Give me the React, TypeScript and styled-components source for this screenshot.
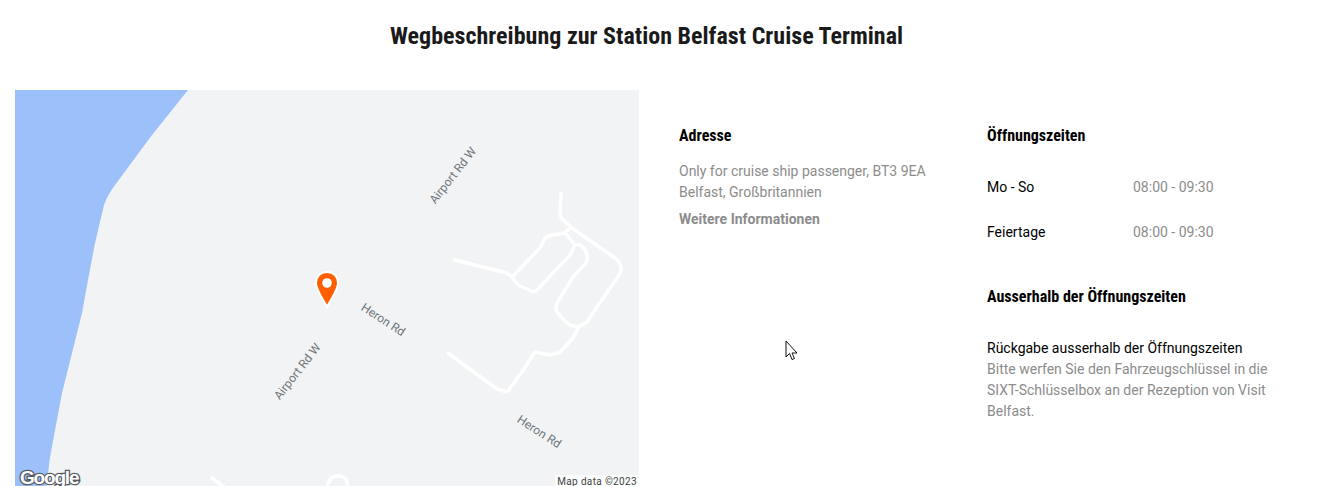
import React from "react";
import styled, { createGlobalStyle } from "styled-components";

const GlobalStyle = createGlobalStyle`
  html, body {
    margin: 0;
    height: 100%;
    overflow: hidden;
    background: #fff;
  }
  body {
    font-family: Roboto, "Liberation Sans", sans-serif;
    font-size: 14px;
    color: #000;
  }
`;

const Page = styled.div`
  position: relative;
  width: 1343px;
  height: 486px;
  overflow: hidden;
`;

const Title = styled.h1`
  margin: 0;
  padding: 22px 50px 0 0;
  height: 90px;
  box-sizing: border-box;
  font-family: "Roboto Condensed", Roboto, sans-serif;
  font-stretch: condensed;
  font-size: 24px;
  line-height: 28px;
  letter-spacing: 0.02px;
  font-weight: 700;
  text-align: center;
  color: #1a1a1a;
`;

const Content = styled.div`
  display: grid;
  grid-template-columns: 624px 348px 1fr;
  padding-left: 15px;
`;

const MapFrame = styled.div`
  position: relative;
  height: 400px;
  background: #f1f3f4;
  overflow: hidden;
`;

const MapCanvas = styled.svg`
  display: block;
  width: 624px;
  height: 400px;
`;

const StreetLabel = styled.text`
  font-family: Roboto, sans-serif;
  font-size: 12px;
  fill: #70757a;
  text-anchor: middle;
`;

const LogoText = styled.text`
  font-family: "Liberation Sans", sans-serif;
  font-size: 19px;
  font-weight: 700;
  letter-spacing: -1.2px;
  fill: #fff;
  stroke: #565b61;
  stroke-width: 2.6px;
  paint-order: stroke;
`;

const Attribution = styled.div`
  position: absolute;
  right: 0;
  bottom: 0;
  height: 15px;
  padding: 0 2px;
  background: rgba(255, 255, 255, 0.7);
  font-size: 10px;
  line-height: 14px;
  letter-spacing: 0.35px;
  color: #444;
`;

const InfoColumn = styled.section`
  padding: 37px 0 0 40px;
`;

const HoursColumn = styled.section`
  padding: 37px 0 0 0;
  width: 290px;
`;

const Heading = styled.h2`
  margin: 0;
  font-family: "Roboto Condensed", Roboto, sans-serif;
  font-stretch: condensed;
  font-size: 16px;
  line-height: 18px;
  font-weight: 700;
  color: #000;
`;

const Muted = styled.p`
  margin: 16px 0 0;
  width: 260px;
  line-height: 21px;
  color: #8c8c8c;
`;

const MoreLink = styled.a`
  display: block;
  margin-top: 6px;
  line-height: 21px;
  font-weight: 700;
  color: #8c8c8c;
`;

const HoursList = styled.div`
  display: grid;
  grid-template-columns: 146px 1fr;
  grid-auto-rows: 21px;
  row-gap: 24px;
  margin-top: 32px;
`;

const Day = styled.span`
  line-height: 21px;
`;

const Time = styled.span`
  line-height: 21px;
  color: #8c8c8c;
`;

const SubHeading = styled(Heading)`
  margin-top: 45px;
`;

const NoteTitle = styled.div`
  margin-top: 32px;
  line-height: 21px;
`;

const NoteBody = styled.div`
  line-height: 21px;
  color: #8c8c8c;
`;

const Cursor = styled.svg`
  position: absolute;
  left: 785px;
  top: 340px;
`;

function MapDrawing() {
  return (
    <MapCanvas viewBox="15 90 624 400">
      <path
        d="M15 90H188L152 135L115 185Q107 196 104 205L95 243L88 280L82 313L62 393L50 457L46 490H15Z"
        fill="#9cc0fa"
      />
      <g fill="none" stroke="#fff" strokeWidth="3.5" strokeLinecap="round" strokeLinejoin="round">
        <path d="M561 193L560 213Q560 218 563 220L572 228L615 258Q626 267 617 278L597 307L587 322L578 327Q577 331 573 338L560 352L550 355L535 352L522 372L507 392L497 389L448 353" />
        <path d="M455 260L503 272Q508 273 512 277Q516 284 520 286L531 291Q535 293 538 289L570 255L575 245L565 233L570 228" />
        <path d="M512 277L540 248L545 238Q548 236 552 235L565 233" />
        <path d="M575 245Q578 244 580 245Q586 249 587 255Q588 260 586 263L573 277L557 303Q555 309 557 312Q563 320 570 325L578 327" />
        <path d="M212 478L223 486" />
        <path d="M328 484L331 478Q338 474 345 478Q348 481 347 490" />
      </g>
      <StreetLabel transform="translate(456 178) rotate(-52)">Airport Rd W</StreetLabel>
      <StreetLabel transform="translate(300.500 374) rotate(-52)">Airport Rd W</StreetLabel>
      <StreetLabel transform="translate(381 323) rotate(33)">Heron Rd</StreetLabel>
      <StreetLabel transform="translate(537 435) rotate(33)">Heron Rd</StreetLabel>
      <path
        d="M327 272C320.500 272 316 276.500 316 283C316 290 323 299 327 307C331 299 338 290 338 283C338 276.500 333.500 272 327 272Z"
        fill="#ff5f00"
        stroke="#fff"
        strokeWidth="2"
      />
      <circle cx="327" cy="283" r="4.800" fill="#fff" />
      <LogoText x="20" y="484">Google</LogoText>
    </MapCanvas>
  );
}

export default function App() {
  return (
    <Page>
      <GlobalStyle />
      <Title>Wegbeschreibung zur Station Belfast Cruise Terminal</Title>
      <Content>
        <MapFrame>
          <MapDrawing />
          <Attribution>Map data ©2023</Attribution>
        </MapFrame>
        <InfoColumn>
          <Heading>Adresse</Heading>
          <Muted>
            Only for cruise ship passenger, BT3 9EA
            <br />
            Belfast, Großbritannien
          </Muted>
          <MoreLink>Weitere Informationen</MoreLink>
        </InfoColumn>
        <HoursColumn>
          <Heading>Öffnungszeiten</Heading>
          <HoursList>
            <Day>Mo - So</Day>
            <Time>08:00 - 09:30</Time>
            <Day>Feiertage</Day>
            <Time>08:00 - 09:30</Time>
          </HoursList>
          <SubHeading>Ausserhalb der Öffnungszeiten</SubHeading>
          <NoteTitle>Rückgabe ausserhalb der Öffnungszeiten</NoteTitle>
          <NoteBody>
            Bitte werfen Sie den Fahrzeugschlüssel in die SIXT-Schlüsselbox an der Rezeption von Visit Belfast.
          </NoteBody>
        </HoursColumn>
      </Content>
      <Cursor width="13" height="21" viewBox="0 0 13 21">
        <path d="M1 1V17L4.500 13.500L7 19.500L9.500 18.500L7 13H12Z" fill="#fff" stroke="#111" strokeWidth="1" />
      </Cursor>
    </Page>
  );
}
